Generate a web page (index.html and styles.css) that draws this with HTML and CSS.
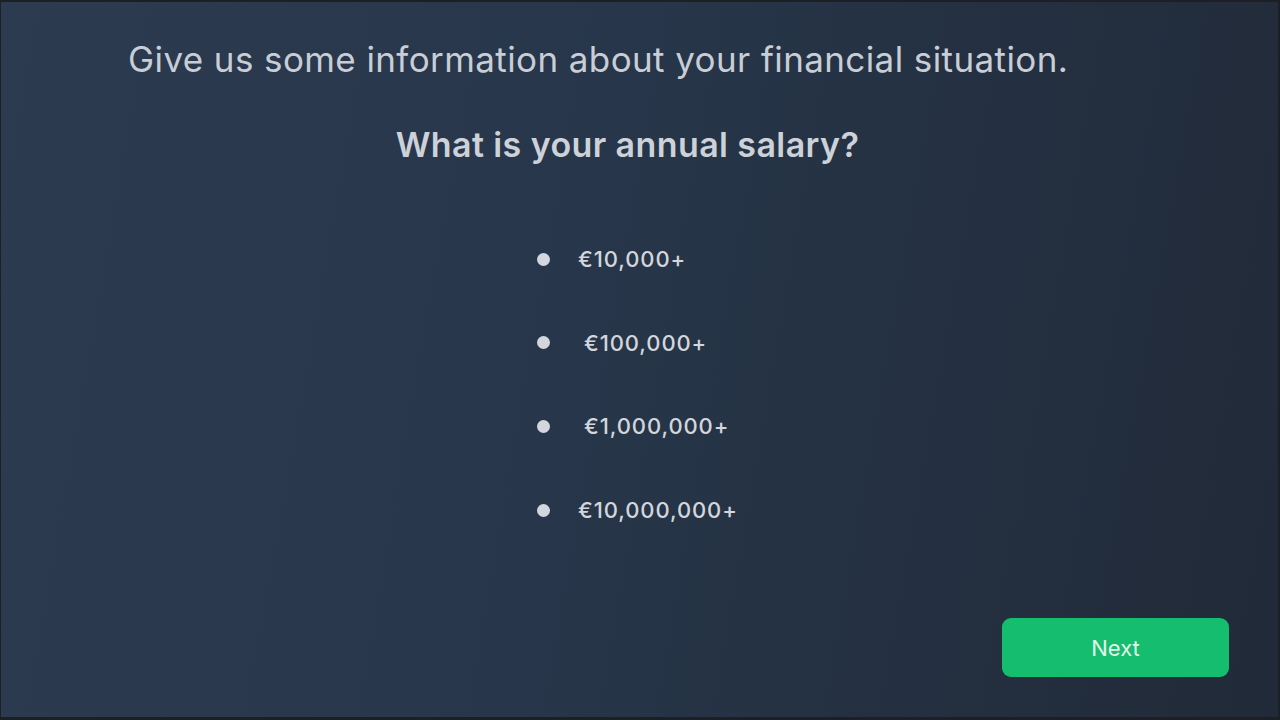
FILE: index.html
```html
<!DOCTYPE html>
<html lang="en">
<head>
<meta charset="utf-8">
<title>Financial situation</title>
<link rel="stylesheet" href="styles.css">
</head>
<body>
<div class="screen">
  <main class="content">
    <h1 class="intro">Give us some information about your financial situation.</h1>
    <h2 class="question">What is your annual salary?</h2>
    <ul class="options">
      <li class="option"><span class="dot"></span><span class="label">€10,000+</span></li>
      <li class="option"><span class="dot"></span><span class="label indent">€100,000+</span></li>
      <li class="option"><span class="dot"></span><span class="label indent">€1,000,000+</span></li>
      <li class="option"><span class="dot"></span><span class="label">€10,000,000+</span></li>
    </ul>
  </main>
  <div class="actions">
    <button class="next" type="button">Next</button>
  </div>
</div>
</body>
</html>
```

FILE: styles.css
```css
* { box-sizing: border-box; }
html, body { margin: 0; padding: 0; height: 100%; }
body {
  font-family: Inter, "Noto Sans", sans-serif;
  background: #1d2024;
}
.screen {
  height: 720px;
  width: 1280px;
  border-style: solid;
  border-color: #1c1f23;
  border-width: 2px 2px 3px 1px;
  background: linear-gradient(100deg, #2c3b4f 0%, #27364a 45%, #212a38 100%);
  display: flex;
  flex-direction: column;
}
.content {
  flex: 1;
  padding: 0 151px 0 127px;
}
.intro {
  margin: 0;
  padding-top: 36px;
  font-size: 35px;
  line-height: 42px;
  font-weight: 400;
  color: #c9ced6;
  letter-spacing: 0.4px;
}
.question {
  margin: 45px 0 0;
  text-align: center;
  font-size: 34px;
  line-height: 40px;
  font-weight: 600;
  color: #cdd2d9;
  letter-spacing: 0.4px;
}
.options {
  list-style: none;
  margin: 82px 0 0 409px;
  padding: 0;
  display: flex;
  flex-direction: column;
  gap: 59.7px;
}
.option {
  display: flex;
  align-items: center;
  height: 24px;
  gap: 28px;
}
.dot {
  width: 13px;
  height: 13px;
  border-radius: 50%;
  background: #d3d6dc;
  flex: none;
}
.label {
  font-size: 22px;
  font-weight: 500;
  color: #d3d6dc;
  letter-spacing: 0.9px;
}
.indent { margin-left: 6px; }
.actions {
  display: flex;
  justify-content: flex-end;
  padding: 0 49px 40px 0;
}
.next {
  width: 227px;
  height: 59px;
  border: none;
  border-radius: 9px;
  background: #15bd6f;
  color: #e3f3e8;
  font-family: Inter, "Noto Sans", sans-serif;
  font-size: 22px;
  font-weight: 400;
  cursor: pointer;
}
```
